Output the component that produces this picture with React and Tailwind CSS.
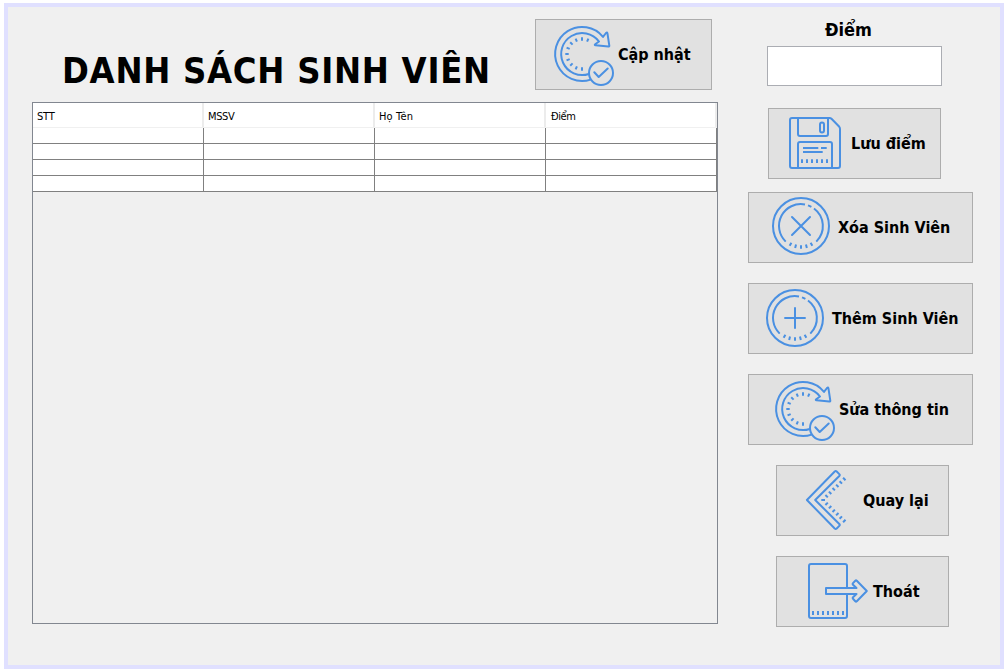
import React from 'react';

const FONT = "font-['DejaVu_Sans_Condensed','DejaVu_Sans',sans-serif] [font-stretch:condensed]";

function Icon({ width = 64, children }) {
  return (
    <svg
      width={width}
      height="64"
      viewBox={`0 0 ${width} 64`}
      fill="none"
      stroke="#4a90e2"
      strokeWidth="2"
      strokeLinejoin="round"
      className="shrink-0"
    >
      {children}
    </svg>
  );
}

// Short radial strokes around (cx, cy); angles are clockwise degrees from the top.
function Ticks({ cx, cy, from, to, angles }) {
  return angles.map((a) => (
    <line key={a} x1={cx} x2={cx} y1={cy - from} y2={cy - to} transform={`rotate(${a} ${cx} ${cy})`} />
  ));
}

function RefreshIcon() {
  return (
    <Icon>
      <path d="M38.7 57.6A27 27 0 1 1 51 14.9L54 11Q55.2 9.8 55.5 11.6L57.3 23.6Q57.4 24.7 56.3 24.6L43.6 23.3Q42.2 23 43.2 22.2L47 19.5A21 21 0 1 0 36.8 52" />
      <circle cx="49" cy="51" r="12" />
      <path d="M42.3 50.3L46.7 55L55.7 46.5" strokeLinecap="round" />
      <Ticks cx={30} cy={32} from={13.3} to={16.7} angles={[22.5, 0, -22.5, -45, -67.5, -90, -112.5, -135, -157.5, -180]} />
    </Icon>
  );
}

function SaveIcon() {
  return (
    <Icon>
      <path d="M9 7H46.5Q47.7 7 48.5 7.8L56.3 15.8Q57 16.6 57 18V55Q57 57 55 57H9Q7 57 7 55V9Q7 7 9 7Z" />
      <path d="M15 7V23Q15 25 17 25H43Q45 25 45 23V7" />
      <rect x="37" y="11.5" width="4" height="10" rx="2" />
      <path d="M15 57V33Q15 31 17 31H47Q49 31 49 33V57" />
      <path d="M20 37H35.3M38 37H43.7M20 41H39.7" />
      <path d="M19 48.3V51.9M24 48.3V51.9M29 48.3V51.9M34 48.3V51.9M39 48.3V51.9M44 48.3V51.9" />
    </Icon>
  );
}

function CoinIcon({ children }) {
  return (
    <Icon>
      <circle cx="32" cy="32" r="28" />
      <path d="M16.7 47.6A21.8 21.8 0 0 1 36 10.5M39 11.4Q41 12.1 42.4 12.8M45 14.5A21.8 21.8 0 0 1 47.3 47.6" />
      <Ticks cx={32} cy={32} from={19.2} to={22.7} angles={[150, 165, 180, 195, 210]} />
      {children}
    </Icon>
  );
}

function BackIcon() {
  const dots = [[48.3, 11], [44.8, 14.4], [41.3, 17.8], [37.7, 21.2], [34.1, 24.8], [30.6, 28.2]];
  return (
    <Icon>
      <path d="M10.9 32L38.7 3.5Q39.7 2.6 40.7 3.5L43.3 6.1Q44.2 7 43.3 8L19.2 32L43.3 56Q44.2 57 43.3 57.9L40.7 60.5Q39.7 61.4 38.7 60.5Z" />
      {dots.map(([x, y]) => (
        <path key={x} d={`M${x - 1.2} ${y - 1.2}l2.4 2.4M${x - 1.2} ${65.2 - y}l2.4 -2.4`} />
      ))}
      <path d="M25.3 32H29" />
    </Icon>
  );
}

function ExitIcon() {
  return (
    <Icon width={74}>
      <path d="M51 29V7Q51 5 49 5H15Q13 5 13 7V57Q13 59 15 59H49Q51 59 51 57V35" />
      <path d="M60.5 29H30V35H60.5L57 38.2Q56.2 39 57 39.8L59.3 42.3Q60 43 60.8 42.3L70.8 32L60.8 21.7Q60 21 59.3 21.7L57 24.1Q56.2 25 57 25.7Z" />
      <path d="M17 52V56M22 52V56M27 52V56M32 52V56M37 52V56M42 52V56M47 52V56" />
    </Icon>
  );
}

function Button({ className, icon, label, labelClass }) {
  return (
    <button className={`flex h-[71px] shrink-0 items-start border border-[#adadad] bg-[#e1e1e1] text-left ${className}`}>
      {icon}
      <span className={`whitespace-nowrap text-[16px] leading-6 font-bold ${labelClass}`}>{label}</span>
    </button>
  );
}

const COLUMNS = [
  { name: 'STT', text: 'tracking-[-0.2px]' },
  { name: 'MSSV', text: 'tracking-[-0.4px]' },
  { name: 'Họ Tên', text: 'tracking-[0.1px]' },
  { name: 'Điểm', text: 'ml-px tracking-[-0.4px]' },
];

function StudentTable() {
  return (
    <div className="mt-3 h-[522px] w-[686px] border border-[#828790]">
      <div className="grid h-[25px] w-[684px] grid-cols-4 border-b border-[#f0f0f0] bg-white">
        {COLUMNS.map((c) => (
          <div key={c.name} className="flex items-center border-r-2 border-[#ececec] pt-[3px] pl-1">
            <span className={`text-[11px] leading-4 ${c.text}`}>{c.name}</span>
          </div>
        ))}
      </div>
      {[0, 1, 2, 3].map((r) => (
        <div key={r} className="grid h-4 w-[684px] grid-cols-4 bg-white">
          {COLUMNS.map((c) => (
            <div key={c.name} className="border-r border-b border-[#808080]" />
          ))}
        </div>
      ))}
    </div>
  );
}

export default function App() {
  return (
    <div className={`h-[672px] w-[1007px] overflow-hidden bg-white pt-[3px] pr-[3px] pb-[3px] pl-1 text-black ${FONT}`}>
      <div className="flex h-full border-4 border-[#e0e0ff] bg-[#f0f0f0] pt-3 pl-6">
        <div className="w-[686px] shrink-0">
          <div className="flex h-[71px] justify-between pr-[6px]">
            <h1 className="mt-[27px] ml-[30px] whitespace-nowrap text-[36px] leading-[50px] font-bold tracking-[0.72px]">DANH SÁCH SINH VIÊN</h1>
            <Button className="w-[177px] pt-[2px] pl-4" icon={<RefreshIcon />} label="Cập nhật" labelClass="mt-[21px] ml-[2px]" />
          </div>
          <StudentTable />
        </div>
        <div className="ml-[30px] flex w-[225px] flex-col">
          <label className="ml-[77px] h-[27px] whitespace-nowrap text-[18px] leading-[22px] font-bold">Điểm</label>
          <input className="ml-[19px] h-10 w-[175px] shrink-0 border border-[#abadb3] bg-white px-2 outline-none" />
          <Button className="mt-[22px] ml-5 w-[173px] pt-[2px] pl-[14px]" icon={<SaveIcon />} label="Lưu điểm" labelClass="mt-[21px] ml-[4px]" />
          <Button
            className="mt-[13px] w-[225px] pt-px pl-5"
            icon={<CoinIcon><path d="M23 23L41 41M41 23L23 41" strokeLinecap="round" /></CoinIcon>}
            label="Xóa Sinh Viên"
            labelClass="mt-[22px] ml-[5px]"
          />
          <Button
            className="mt-5 w-[225px] pt-[2px] pl-[14px]"
            icon={<CoinIcon><path d="M32 21.3V42.7M21.3 32H42.7" /></CoinIcon>}
            label="Thêm Sinh Viên"
            labelClass="mt-[21px] ml-[5px]"
          />
          <Button className="mt-5 w-[225px] pt-[2px] pl-6" icon={<RefreshIcon />} label="Sửa thông tin" labelClass="mt-[21px] ml-[2px]" />
          <Button className="mt-5 ml-7 w-[173px] pt-[2px] pl-[19px]" icon={<BackIcon />} label="Quay lại" labelClass="mt-[21px] ml-[3px]" />
          <Button className="mt-5 ml-7 w-[173px] pt-[2px] pl-[19px]" icon={<ExitIcon />} label="Thoát" labelClass="mt-[21px] ml-[3px]" />
        </div>
      </div>
    </div>
  );
}
